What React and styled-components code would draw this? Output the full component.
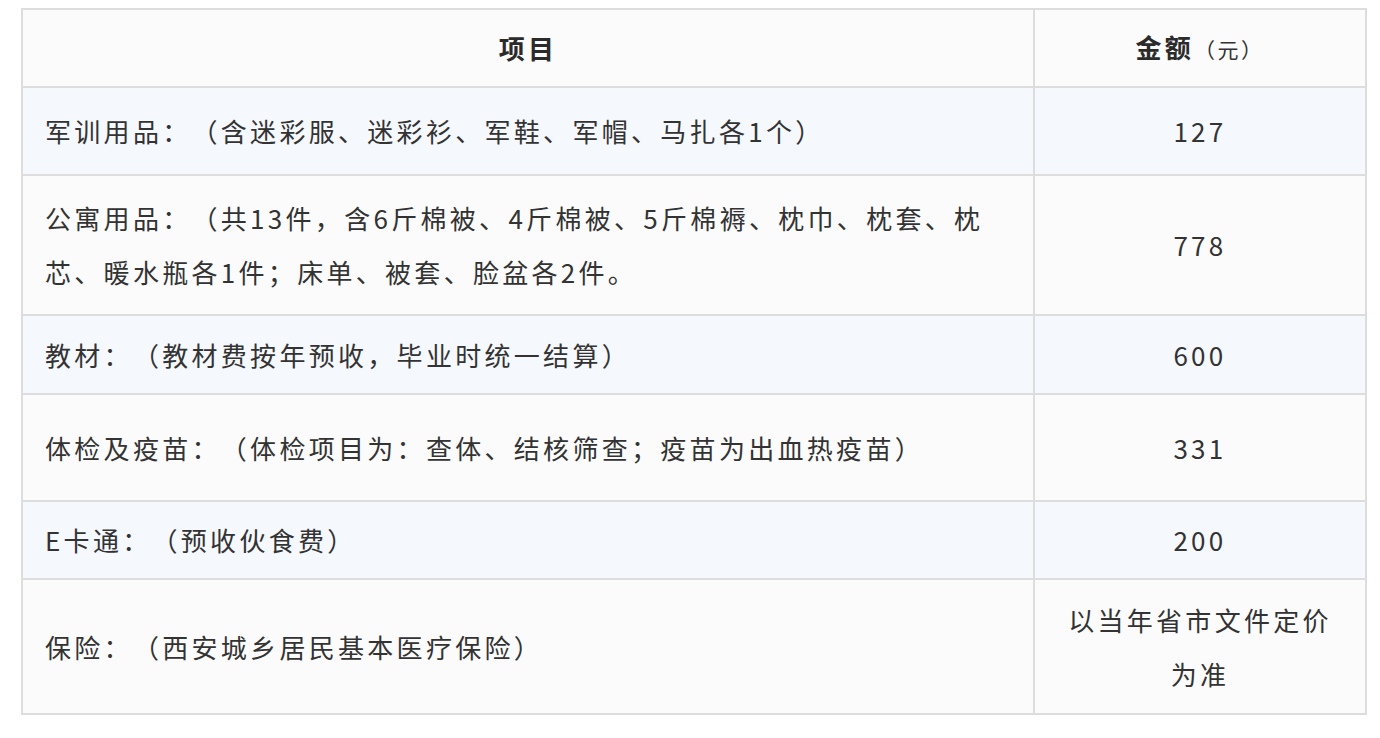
import React from 'react';
import styled, { createGlobalStyle } from 'styled-components';

const GlobalStyle = createGlobalStyle`
    html, body {
        margin: 0;
        padding: 0;
        background: #ffffff;
    }
    body {
        font-family: "Noto Sans CJK SC", "Noto Sans", sans-serif;
        color: #333333;
        text-spacing-trim: space-all;
    }
`;

const Page = styled.div`
    padding: 8px 13px 0 21px;
`;

const Table = styled.table`
    width: 1346px;
    border-collapse: collapse;
    border: 2px solid #dddddd;
    font-size: 26px;
    letter-spacing: 3.3px;
    text-spacing-trim: space-all;
`;

const Row = styled.tr`
    height: ${(p) => p.$h}px;
    background: ${(p) => (p.$striped ? '#f5f8fd' : '#fbfbfb')};
`;

const HeadCell = styled.th`
    border: 2px solid #dddddd;
    padding: 0 22px;
    font-weight: 700;
    text-align: center;
    line-height: 54px;
    color: #2b2b2b;
    width: ${(p) => (p.$narrow ? '286px' : 'auto')};
`;

const Unit = styled.span`
    font-size: 21px;
    font-weight: 400;
    letter-spacing: 2.5px;
    color: #333333;
`;

const Cell = styled.td`
    border: 2px solid #dddddd;
    padding: 0 ${(p) => (p.$center ? '22px' : '26px')} 0 22px;
    line-height: 54px;
    vertical-align: middle;
    text-align: ${(p) => (p.$center ? 'center' : 'left')};
`;

const rows = [
    { item: '军训用品：（含迷彩服、迷彩衫、军鞋、军帽、马扎各1个）', price: '127', h: 88 },
    {
        item: '公寓用品：（共13件，含6斤棉被、4斤棉被、5斤棉褥、枕巾、枕套、枕芯、暖水瓶各1件；床单、被套、脸盆各2件。',
        price: '778',
        h: 140,
    },
    { item: '教材：（教材费按年预收，毕业时统一结算）', price: '600', h: 79 },
    { item: '体检及疫苗：（体检项目为：查体、结核筛查；疫苗为出血热疫苗）', price: '331', h: 107 },
    { item: 'E卡通：（预收伙食费）', price: '200', h: 78 },
    { item: '保险：（西安城乡居民基本医疗保险）', price: '以当年省市文件定价为准', h: 135 },
];

const App = () => {
    return (
        <>
            <GlobalStyle />
            <Page>
                <Table>
                    <thead>
                        <Row $h={78}>
                            <HeadCell>项目</HeadCell>
                            <HeadCell $narrow>
                                金额<Unit>（元）</Unit>
                            </HeadCell>
                        </Row>
                    </thead>
                    <tbody>
                        {rows.map((r, i) => (
                            <Row key={r.price} $h={r.h} $striped={i % 2 === 0}>
                                <Cell>{r.item}</Cell>
                                <Cell $center>{r.price}</Cell>
                            </Row>
                        ))}
                    </tbody>
                </Table>
            </Page>
        </>
    );
};

export default App;
